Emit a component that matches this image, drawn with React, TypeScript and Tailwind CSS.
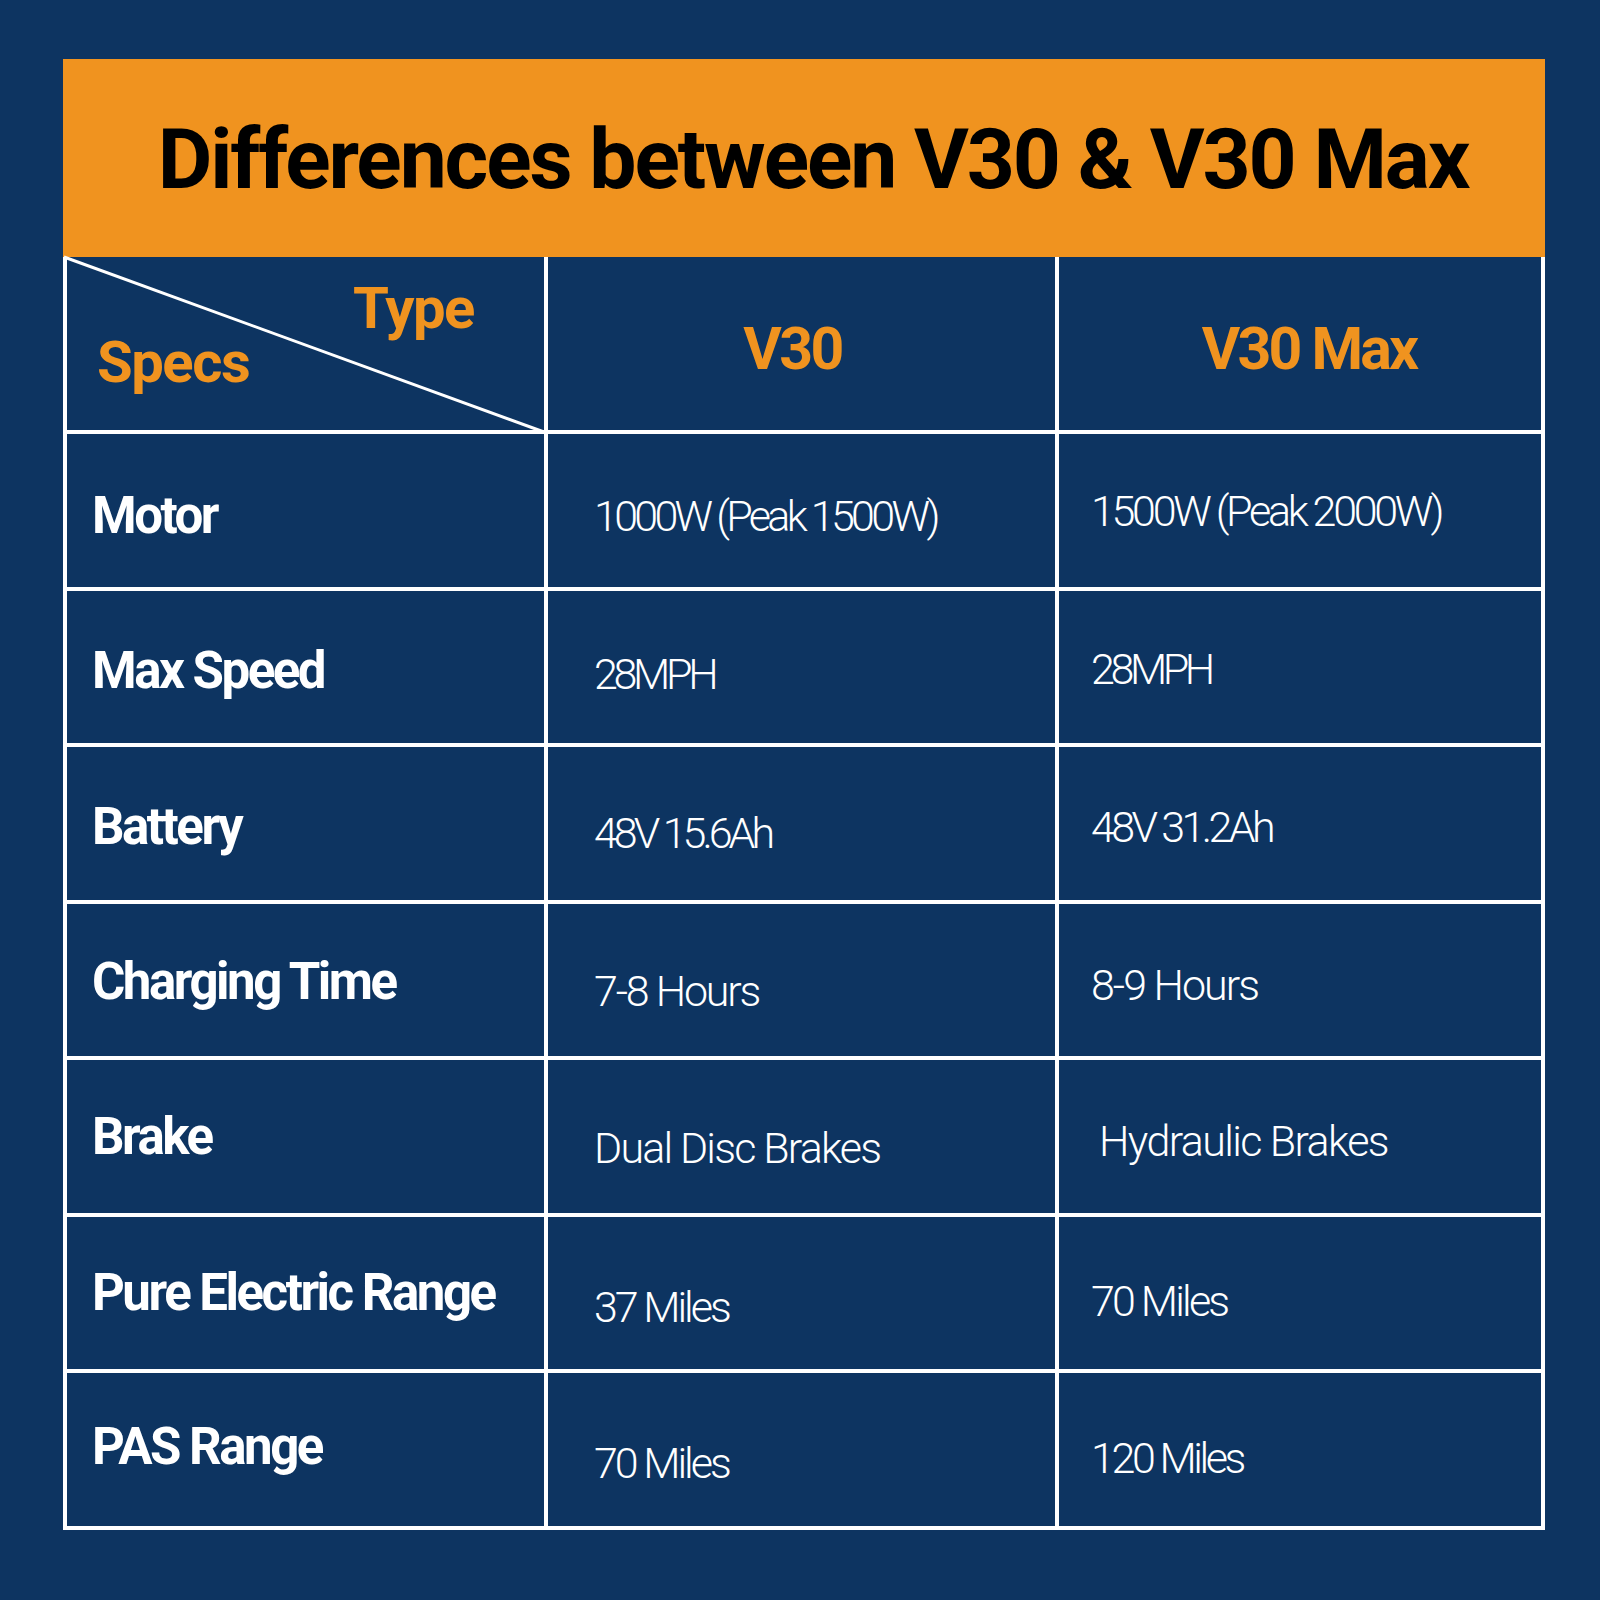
const rows = [
  { spec: 'Motor', v30: '1000W (Peak 1500W)', max: '1500W (Peak 2000W)', sp: 'pt-[10px]', vp: 'pt-[12px]', mp: 'pt-[2px]', mx: 'pl-[32px]', vt: 'tracking-[-3.7px]', mt: 'tracking-[-3.3px]' },
  { spec: 'Max Speed', v30: '28MPH', max: '28MPH', sp: 'pt-[6px]', vp: 'pt-[15px]', mp: 'pt-[4px]', mx: 'pl-[32px]', vt: 'tracking-[-4.3px]', mt: 'tracking-[-4.4px]' },
  { spec: 'Battery', v30: '48V 15.6Ah', max: '48V 31.2Ah', sp: 'pt-[6px]', vp: 'pt-[20px]', mp: 'pt-[7px]', mx: 'pl-[32px]', vt: 'tracking-[-4px]', mt: 'tracking-[-3.6px]' },
  { spec: 'Charging Time', v30: '7-8 Hours', max: '8-9 Hours', sp: 'pt-[2px]', vp: 'pt-[22px]', mp: 'pt-[10px]', mx: 'pl-[32px]', vt: 'tracking-[-2.2px]', mt: 'tracking-[-2px]' },
  { spec: 'Brake', v30: 'Dual Disc Brakes', max: 'Hydraulic Brakes', sp: 'pt-[0px]', vp: 'pt-[24px]', mp: 'pt-[9px]', mx: 'pl-[40px]', vt: 'tracking-[-1.8px]', mt: 'tracking-[-1.6px]' },
  { spec: 'Pure Electric Range', v30: '37 Miles', max: '70 Miles', sp: 'pb-[2px]', vp: 'pt-[28px]', mp: 'pt-[16px]', mx: 'pl-[32px]', vt: 'tracking-[-3px]', mt: 'tracking-[-2.8px]' },
  { spec: 'PAS Range', v30: '70 Miles', max: '120 Miles', sp: 'pb-[6px]', vp: 'pt-[28px]', mp: 'pt-[18px]', mx: 'pl-[32px]', vt: 'tracking-[-3px]', mt: 'tracking-[-3.4px]' },
];

const font = "font-['Roboto','Liberation_Sans',sans-serif]";

export default function App() {
  return (
    <div className={`w-[1600px] h-[1600px] bg-[#0d3461] pt-[59px] pl-[63px] ${font}`}>
      <div className="w-[1482px] h-[198px] bg-[#f0931f] flex items-center justify-center pl-[18px] pt-[4px]">
        <h1 className="text-[84px] font-bold text-black tracking-[-2.1px] leading-none">
          Differences between V30 &amp; V30 Max
        </h1>
      </div>

      <div className="w-[1482px] bg-white px-[4px] pb-[4px] grid grid-cols-[477px_507px_482px] grid-rows-[173px_153px_152px_153px_152px_153px_152px_153px] gap-[4px]">
        <div className="relative bg-[#0d3461] text-[#f0931f] font-bold text-[58px] leading-none tracking-[-1.5px]">
          <svg className="absolute left-[-4px] top-0 overflow-visible" width="483" height="175" viewBox="0 0 483 175">
            <line x1="1" y1="0" x2="481" y2="175" stroke="white" strokeWidth="3" />
          </svg>
          <div className="pl-[286px] pt-[22px]">Type</div>
          <div className="pl-[30px] -mt-[4px]">Specs</div>
        </div>
        <div className="bg-[#0d3461] flex items-center justify-center pr-[18px] pt-[10px]">
          <span className="text-[#f0931f] font-bold text-[59px] leading-none tracking-[-2.5px]">V30</span>
        </div>
        <div className="bg-[#0d3461] flex items-center justify-center pl-[18px] pt-[10px]">
          <span className="text-[#f0931f] font-bold text-[59px] leading-none tracking-[-2.8px]">V30 Max</span>
        </div>

        {rows.map((r) => (
          <div key={r.spec} className="contents">
            <div className={`bg-[#0d3461] flex items-center pl-[25px] ${r.sp}`}>
              <span className="text-white font-bold text-[51px] leading-none tracking-[-2.5px]">{r.spec}</span>
            </div>
            <div className={`bg-[#0d3461] flex items-center pl-[46px] ${r.vp}`}>
              <span className={`text-white font-light text-[43px] leading-none ${r.vt}`}>{r.v30}</span>
            </div>
            <div className={`bg-[#0d3461] flex items-center ${r.mx} ${r.mp}`}>
              <span className={`text-white font-light text-[43px] leading-none ${r.mt}`}>{r.max}</span>
            </div>
          </div>
        ))}
      </div>
    </div>
  );
}
